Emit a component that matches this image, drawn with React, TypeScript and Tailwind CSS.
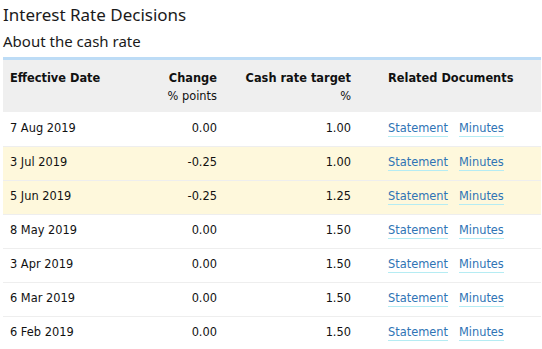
import React from 'react';

const rows = [
  { date: '7 Aug 2019', change: '0.00', rate: '1.00', hl: false },
  { date: '3 Jul 2019', change: '-0.25', rate: '1.00', hl: true },
  { date: '5 Jun 2019', change: '-0.25', rate: '1.25', hl: true },
  { date: '8 May 2019', change: '0.00', rate: '1.50', hl: false },
  { date: '3 Apr 2019', change: '0.00', rate: '1.50', hl: false },
  { date: '6 Mar 2019', change: '0.00', rate: '1.50', hl: false },
  { date: '6 Feb 2019', change: '0.00', rate: '1.50', hl: false },
];

const DocLink = ({ label }: { label: string }) => (
  <a href="#" className="text-[#2f74b5] border-b border-[#b5ecf3] leading-[15px] no-underline">
    {label}
  </a>
);

export default function App() {
  return (
    <div className="bg-white w-[542px] h-[349px] overflow-hidden pl-[3px] text-[#111]">
      <h1 className="font-['Noto_Sans',sans-serif] text-[17px] leading-[22px] pt-[4px] text-[#1a1a1a]">
        Interest Rate Decisions
      </h1>
      <h2 className="font-['Noto_Sans',sans-serif] text-[15px] leading-[20px] mt-[5px] text-[#1a1a1a]">
        About the cash rate
      </h2>
      <table className="mt-[6px] w-[538px] border-t-[3px] border-[#bddcf6] border-collapse font-['DejaVu_Sans',sans-serif] text-[11.4px]">
        <thead>
          <tr className="bg-[#efefef] align-top leading-[18px]">
            <th className="text-left font-bold pl-[7px] pt-[9px] pb-[7px] w-[120px]">Effective Date</th>
            <th className="text-right font-bold pt-[9px] pb-[7px] w-[94px]">
              Change
              <div className="font-normal">% points</div>
            </th>
            <th className="text-right font-bold pt-[9px] pb-[7px] w-[134px]">
              Cash rate target
              <div className="font-normal">%</div>
            </th>
            <th className="text-left font-bold pt-[9px] pb-[7px] pl-[37px]">Related Documents</th>
          </tr>
        </thead>
        <tbody>
          {rows.map((r) => (
            <tr key={r.date} className={`h-[34px] border-b border-[#eeeeee] ${r.hl ? 'bg-[#fef8dc]' : 'bg-white'}`}>
              <td className="pl-[7px]">{r.date}</td>
              <td className="text-right">{r.change}</td>
              <td className="text-right">{r.rate}</td>
              <td className="pl-[37px]">
                <span className="flex gap-[11px]">
                  <DocLink label="Statement" />
                  <DocLink label="Minutes" />
                </span>
              </td>
            </tr>
          ))}
        </tbody>
      </table>
    </div>
  );
}
